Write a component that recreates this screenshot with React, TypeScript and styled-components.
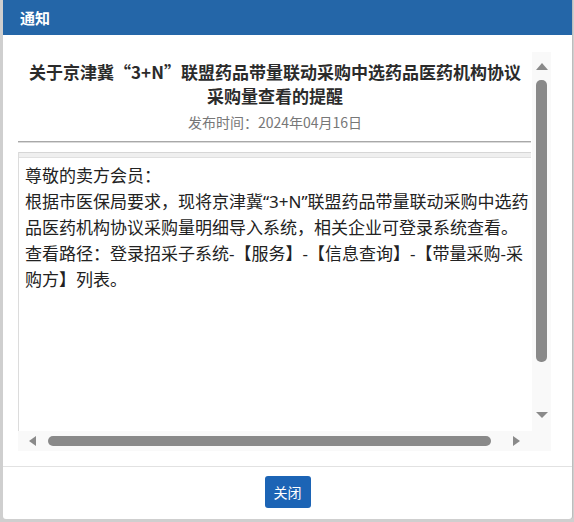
import styled, { createGlobalStyle } from 'styled-components';

const GlobalStyle = createGlobalStyle`
    html, body {
        margin: 0;
        padding: 0;
        background: #cfcfcf;
    }
    body {
        width: 574px;
        height: 522px;
        overflow: hidden;
        font-family: "Noto Sans", "Noto Sans CJK SC", sans-serif;
    }
`

// #region Styles

const Page = styled.div`
    width: 574px;
    height: 522px;
    padding: 0 2px 3px 3px;
    box-sizing: border-box;
`

const Dialog = styled.div`
    display: flex;
    flex-direction: column;
    width: 569px;
    height: 519px;
    background: #ffffff;
    border-radius: 0 0 3px 3px;
    box-shadow: 1px 0 0 #bdbdbd;
`

const Header = styled.div`
    height: 35px;
    flex: none;
    display: flex;
    align-items: center;
    padding: 0 0 0 17px;
    background: #2466a8;
    color: #ffffff;
    font-family: "Noto Sans CJK SC", sans-serif;
    font-size: 15px;
    font-weight: 700;
`

const Body = styled.div`
    flex: none;
    padding: 17px 21px 15px 15px;
    border-bottom: 1px solid #e2e2e2;
`

const ScrollFrame = styled.div`
    display: grid;
    grid-template-columns: 514px 19px;
    grid-template-rows: 379px 20px;
`

const Viewport = styled.div`
    overflow: hidden;
    background: #ffffff;
`

const Title = styled.h3`
    margin: 0;
    padding: 8px 9px 0 9px;
    text-align: center;
    font-family: "Noto Sans CJK SC", sans-serif;
    font-size: 17px;
    line-height: 24px;
    font-weight: 700;
    color: #2b2b2b;
`

const PublishDate = styled.div`
    margin-top: 4px;
    text-align: center;
    font-family: "Noto Sans CJK SC", sans-serif;
    font-size: 14px;
    line-height: 20px;
    color: #777777;
`

const Rule = styled.div`
    width: 513px;
    height: 0;
    margin: 9px 0 9px 0;
    border-top: 1px solid #a8a8a8;
    border-bottom: 1px solid #dadada;
`

const ContentBox = styled.div`
    width: 513px;
    min-height: 300px;
    border-left: 1px solid #dcdcdc;
    box-sizing: border-box;
    .band {
        height: 4px;
        background: #efefef;
        border-top: 1px solid #d6d6d6;
        border-bottom: 1px solid #e0e0e0;
    }
    p {
        width: 510px;
        margin: 0;
        padding: 5px 0 0 6px;
        font-family: "Noto Sans", "Noto Sans CJK SC", sans-serif;
        font-size: 17px;
        line-height: 26px;
        color: #222222;
    }
`

const VBar = styled.div`
    display: flex;
    flex-direction: column;
    align-items: center;
    padding: 11px 0 13px 0;
    background: #f9f9f9;
    .spacer {
        flex: 1;
    }
`

const HBar = styled.div`
    grid-column: 1 / 3;
    display: flex;
    align-items: center;
    padding: 0 31px 0 11px;
    background: #f9f9f9;
    .spacer {
        flex: 1;
    }
`

const Thumb = styled.div<{ $vertical?: boolean }>`
    background: #898989;
    border-radius: 5px;
    width: ${(p) => (p.$vertical ? '11px' : '443px')};
    height: ${(p) => (p.$vertical ? '282px' : '10px')};
    margin: ${(p) => (p.$vertical ? '10px 0 0 0' : '0 0 0 12px')};
`

const Arrow = styled.div<{ $dir: 'up' | 'down' | 'left' | 'right' }>`
    width: 0;
    height: 0;
    ${(p) => p.$dir === 'up' && `
        border-left: 6px solid transparent;
        border-right: 6px solid transparent;
        border-bottom: 7px solid #8a8a8a;
    `}
    ${(p) => p.$dir === 'down' && `
        border-left: 6px solid transparent;
        border-right: 6px solid transparent;
        border-top: 6px solid #8a8a8a;
    `}
    ${(p) => p.$dir === 'left' && `
        border-top: 5px solid transparent;
        border-bottom: 5px solid transparent;
        border-right: 7px solid #8a8a8a;
    `}
    ${(p) => p.$dir === 'right' && `
        border-top: 5px solid transparent;
        border-bottom: 5px solid transparent;
        border-left: 7px solid #8a8a8a;
    `}
`

const Footer = styled.div`
    flex: 1;
    display: flex;
    justify-content: center;
    padding: 9px 0 0 0;
`

const CloseButton = styled.button`
    height: 32px;
    padding: 0 9px;
    border: none;
    border-radius: 3px;
    background: #1c64b5;
    color: #ffffff;
    font-family: "Noto Sans CJK SC", sans-serif;
    font-size: 14px;
    cursor: pointer;
`

// #endregion

export default function App() {
    return (
        <>
            <GlobalStyle />
            <Page>
                <Dialog>
                    <Header>通知</Header>
                    <Body>
                        <ScrollFrame>
                            <Viewport>
                                <Title>关于京津冀“3+N”联盟药品带量联动采购中选药品医药机构协议采购量查看的提醒</Title>
                                <PublishDate>发布时间：2024年04月16日</PublishDate>
                                <Rule />
                                <ContentBox>
                                    <div className="band" />
                                    <p>
                                        尊敬的卖方会员：<br />
                                        根据市医保局要求，现将京津冀“3+N”联盟药品带量联动采购中选药品医药机构协议采购量明细导入系统，相关企业可登录系统查看。<br />
                                        查看路径：登录招采子系统-【服务】-【信息查询】-【带量采购-采购方】列表。
                                    </p>
                                </ContentBox>
                            </Viewport>
                            <VBar>
                                <Arrow $dir="up" />
                                <Thumb $vertical />
                                <div className="spacer" />
                                <Arrow $dir="down" />
                            </VBar>
                            <HBar>
                                <Arrow $dir="left" />
                                <Thumb />
                                <div className="spacer" />
                                <Arrow $dir="right" />
                            </HBar>
                        </ScrollFrame>
                    </Body>
                    <Footer>
                        <CloseButton>关闭</CloseButton>
                    </Footer>
                </Dialog>
            </Page>
        </>
    )
}
